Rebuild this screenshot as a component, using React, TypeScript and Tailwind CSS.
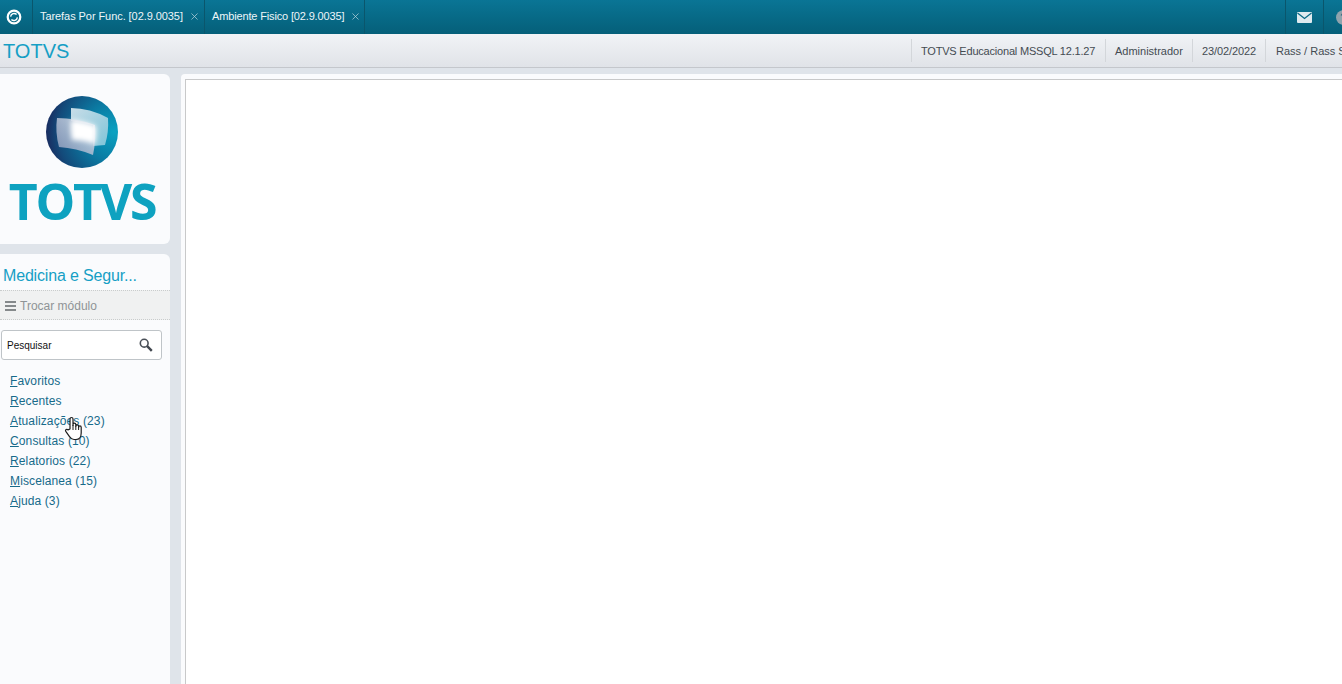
import React from 'react';
import { X } from 'lucide-react';

const menuItems = [
  { key: 'F', rest: 'avoritos' },
  { key: 'R', rest: 'ecentes' },
  { key: 'A', rest: 'tualizações (23)' },
  { key: 'C', rest: 'onsultas (10)' },
  { key: 'R', rest: 'elatorios (22)' },
  { key: 'M', rest: 'iscelanea (15)' },
  { key: 'A', rest: 'juda (3)' },
];

const tabs = ['Tarefas Por Func. [02.9.0035]', 'Ambiente Fisico [02.9.0035]'];

const Globe = () => (
  <svg width="72" height="72" viewBox="0 0 72 72">
    <defs>
      <radialGradient id="sphere" cx="0.95" cy="0.5" r="1.05">
        <stop offset="0" stopColor="#0aa2c2" />
        <stop offset="0.4" stopColor="#0b7aa2" />
        <stop offset="0.75" stopColor="#134a7a" />
        <stop offset="1" stopColor="#1d1a50" />
      </radialGradient>
      <linearGradient id="panelA" x1="0" y1="0" x2="1" y2="1">
        <stop offset="0" stopColor="#c8dde8" />
        <stop offset="1" stopColor="#7fc4d8" />
      </linearGradient>
      <linearGradient id="panelB" x1="1" y1="0" x2="0" y2="1">
        <stop offset="0" stopColor="#e4e9f1" />
        <stop offset="1" stopColor="#8c9abb" />
      </linearGradient>
      <filter id="soft" x="-30%" y="-30%" width="160%" height="160%">
        <feGaussianBlur stdDeviation="2.6" />
      </filter>
    </defs>
    <circle cx="36" cy="36" r="36" fill="url(#sphere)" />
    <path d="M25 12 Q44 12 62 22 Q63 36 59 49 L47 50 L47 29 L25 25 Z" fill="url(#panelA)" />
    <path d="M11 22 Q30 22 49 29 Q50 45 47 59 Q30 52 13 51 Q9 36 11 22 Z" fill="url(#panelB)" fillOpacity="0.85" />
    <path d="M25 24 Q38 25 50 30 Q51 39 49 48 Q37 44 26 44 Q24 34 25 24 Z" fill="#fff" filter="url(#soft)" />
  </svg>
);

const HandCursor = () => (
  <svg width="20" height="25" viewBox="0 0 20 25" className="absolute left-[64px] top-[45px]">
    <path
      d="M6 13V3a1.5 1.5 0 0 1 3 0v6.5V8.5a1.4 1.4 0 0 1 2.8 0v1.7a1.4 1.4 0 0 1 2.8 0v1a1.3 1.3 0 0 1 2.6 0V17c0 3.5-1.8 6.5-5.2 6.5H10c-2.2 0-3.4-1.1-4.5-2.8L1.8 15.4c-1-1.6 1-2.9 2.2-1.5Z"
      fill="#fff"
      stroke="#1c1c1c"
      strokeWidth="1.2"
      strokeLinejoin="round"
    />
    <path d="M9 9v5M11.8 10v4M14.6 11v3" stroke="#1c1c1c" strokeWidth="1" />
  </svg>
);

export default function App() {
  return (
    <div className="h-[684px] overflow-hidden flex flex-col bg-[#dfe4ea] font-['Liberation_Sans',Arial,sans-serif]">
      {/* barra superior */}
      <div className="h-[34px] shrink-0 flex bg-gradient-to-b from-[#0a7595] to-[#055f79] text-[#eef6f9]">
        <div className="w-[33px] shrink-0 flex items-center justify-center border-r border-[#0a566c] pr-[5px]">
          <svg width="16" height="16" viewBox="0 0 16 16" fill="none">
            <circle cx="8" cy="8" r="6.3" stroke="#fff" strokeWidth="2.2" />
            <path d="M4.6 7.6 A3.6 3.6 0 0 1 10.6 5.4 M11.4 8.4 A3.6 3.6 0 0 1 5.4 10.6" stroke="#fff" strokeWidth="1.4" />
          </svg>
        </div>
        {tabs.map((tab, i) => (
          <div
            key={tab}
            className={`flex items-center pl-[7px] pb-[1px] border-r border-[#0a566c] ${i === 0 ? 'w-[172px]' : 'w-[160px]'}`}
          >
            <span className={`whitespace-nowrap text-[11px] ${i === 0 ? 'tracking-[-0.07px]' : 'tracking-[-0.15px]'}`}>{tab}</span>
            <X className="w-[11px] h-[11px] ml-[6px] text-[#b5d2dc]" strokeWidth={1.6} />
          </div>
        ))}
        <div className="flex-1" />
        <div className="w-[38px] flex items-center justify-center border-l border-[#0a566c]">
          <svg width="15" height="11" viewBox="0 0 15 11">
            <rect width="15" height="11" rx="1" fill="#dfeaef" />
            <path d="M0.5 1 L7.5 6.5 L14.5 1" fill="none" stroke="#0a6a86" strokeWidth="1.3" />
          </svg>
        </div>
        <div className="w-[19px] flex items-center border-l border-[#0a566c] pl-[12px] overflow-hidden">
          <div className="w-[15px] h-[15px] shrink-0 rounded-full bg-[#8fa3ad] text-[11px] font-bold leading-[15px] text-center text-[#0a6a86]">
            ?
          </div>
        </div>
      </div>

      {/* barra de informações */}
      <div className="h-[34px] shrink-0 flex items-center bg-gradient-to-b from-[#f1f3f6] to-[#e0e3e8] border-b border-[#c4c7cc]">
        <span className="pl-[3px] text-[20px] leading-none text-[#169fc5]">TOTVS</span>
        <div className="flex-1" />
        <div className="w-[194px] h-[23px] pl-[9px] pt-[1px] flex items-center border-l border-[#d3d6da] text-[11px] tracking-[-0.2px] text-[#444b52] whitespace-nowrap">
          TOTVS Educacional MSSQL 12.1.27
        </div>
        <div className="w-[87px] h-[23px] pl-[9px] pt-[1px] flex items-center border-l border-[#d3d6da] text-[11px] text-[#444b52] whitespace-nowrap">
          Administrador
        </div>
        <div className="w-[73px] h-[23px] pl-[9px] pt-[1px] flex items-center border-l border-[#d3d6da] text-[11px] tracking-[-0.1px] text-[#444b52] whitespace-nowrap">
          23/02/2022
        </div>
        <div className="w-[77px] h-[23px] pl-[10px] pt-[1px] flex items-center border-l border-[#d3d6da] text-[11px] text-[#444b52] whitespace-nowrap overflow-hidden">
          Rass / Rass S
        </div>
      </div>

      <div className="flex-1 min-h-0 flex pt-[6px]">
        {/* coluna lateral */}
        <div className="w-[170px] shrink-0 flex flex-col gap-[10px]">
          <div className="h-[170px] shrink-0 bg-[#fafbfd] rounded-r-[6px] flex flex-col items-center pt-[22px] pr-[6px]">
            <Globe />
            <div className="mt-[8px] text-[50px] leading-[50px] font-['Open_Sans',sans-serif] font-bold tracking-[-2.2px] text-[#0ea2c0]">
              TOTVS
            </div>
          </div>

          <div className="flex-1 bg-[#fafbfd] rounded-tr-[6px]">
            <div className="h-[36px] pl-[3px] pt-[12px] text-[16px] leading-[20px] tracking-[-0.17px] text-[#169fc5] whitespace-nowrap">
              Medicina e Segur...
            </div>
            <div className="h-[30px] flex items-center pl-[5px] pt-[1px] gap-[4px] bg-[#f0f1f1] border-y border-dotted border-[#c9cccc] text-[12px] text-[#8f9496]">
              <div className="w-[11px] flex flex-col gap-[2px]">
                <div className="h-[2px] bg-[#85898b]" />
                <div className="h-[2px] bg-[#85898b]" />
                <div className="h-[2px] bg-[#85898b]" />
              </div>
              Trocar módulo
            </div>
            <div className="ml-[1px] mr-[8px] mt-[10px] h-[30px] flex items-center justify-between pl-[5px] pr-[8px] bg-white border border-[#bfc4c8] rounded-[3px] text-[10px] text-[#111]">
              Pesquisar
              <svg width="14" height="14" viewBox="0 0 14 14" fill="none">
                <circle cx="5.2" cy="5.2" r="3.9" stroke="#4a5058" strokeWidth="1.6" />
                <path d="M8.2 8.2 L12.8 12.8" stroke="#40464e" strokeWidth="2.4" />
              </svg>
            </div>
            <div className="relative mt-[11px] pl-[10px]">
              {menuItems.map(item => (
                <div key={item.key + item.rest} className="h-[20px] text-[12px] leading-[20px] tracking-[0.12px] text-[#166a8a] whitespace-nowrap">
                  <span className="underline">{item.key}</span>
                  {item.rest}
                </div>
              ))}
              <HandCursor />
            </div>
          </div>
        </div>

        {/* área de conteúdo */}
        <div className="flex-1 ml-[11px] pl-[4px] pt-[5px] bg-[#fafbfd] rounded-tl-[4px]">
          <div className="h-full bg-white border-l border-t border-[#c8c9ca]" />
        </div>
      </div>
    </div>
  );
}
